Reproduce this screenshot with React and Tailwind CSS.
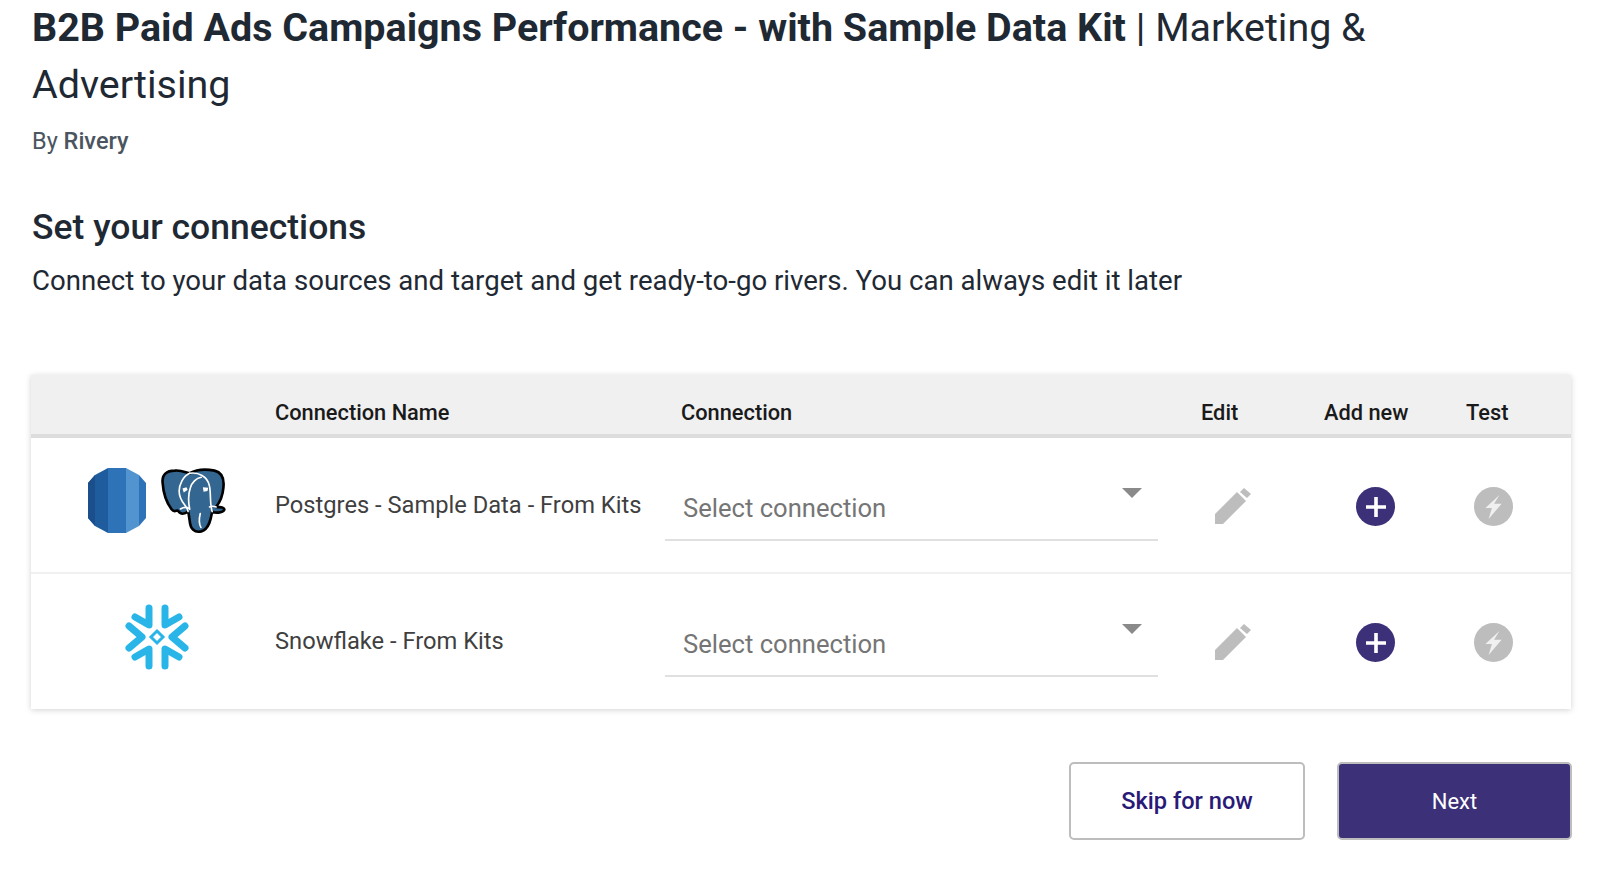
import React from 'react';

const RdsLogo = () => (
  <svg width="58" height="65" viewBox="0 0 58 65">
    <polygon points="7,7 20,0 20,65 7,58 0,50 0,15" fill="#1f5c9e" />
    <polygon points="0,15 7,7 7,58 0,50" fill="#1a4f8b" />
    <polygon points="20,0 38,0 38,65 20,65" fill="#2e73b8" />
    <polygon points="38,0 51,7 51,58 38,65" fill="#5294cf" />
    <polygon points="51,7 58,15 58,50 51,58" fill="#2e73b8" />
  </svg>
);

const PostgresLogo = () => (
  <svg width="66" height="66" viewBox="0 0 200 200">
    <path
      d="M8 45C5 20 20 8 45 8C60 6 75 12 90 16C110 5 140 3 165 8C190 14 195 35 192 60C190 85 180 105 170 118C178 118 192 118 195 125C195 135 170 138 158 132C155 150 150 185 125 192C105 197 92 185 90 160C88 150 88 140 85 132C75 140 62 142 55 130C50 125 45 138 35 125C20 105 10 75 8 45Z"
      fill="#336791"
      stroke="#000"
      strokeWidth="8"
      strokeLinejoin="round"
    />
    <g fill="none" stroke="#fff" strokeWidth="5" strokeLinecap="round">
      <path d="M90 16C70 25 58 50 58 70C58 85 65 100 75 112C80 120 85 125 85 132" />
      <path d="M90 16C115 12 145 25 150 55C155 80 150 105 158 132" />
      <path d="M90 125C85 100 85 80 92 60C96 45 110 30 125 28" />
      <path d="M62 124C72 118 80 118 88 122" />
      <path d="M150 118C158 114 165 116 170 118" />
      <path d="M122 138C118 155 118 170 124 180" />
    </g>
    <path d="M68 62L80 58L84 66L72 74Z" fill="#fff" />
    <path d="M130 58L146 60L144 70L132 72Z" fill="#fff" />
  </svg>
);

const SnowflakeLogo = () => (
  <svg width="64" height="66" viewBox="0 0 64 66">
    <g fill="none" stroke="#29b5e8" strokeWidth="7" strokeLinecap="round" strokeLinejoin="round">
      <path d="M24 4V21L10 13" />
      <path d="M40 4V21L54 13" />
      <path d="M24 62V45L10 53" />
      <path d="M40 62V45L54 53" />
      <path d="M4 22L17 33L4 44" />
      <path d="M60 22L47 33L60 44" />
    </g>
    <path d="M32 27L38 33L32 39L26 33Z" fill="none" stroke="#29b5e8" strokeWidth="3" />
  </svg>
);

const PencilIcon = () => (
  <svg width="36" height="36" viewBox="0 0 36 36" fill="#bdbdbd">
    <polygon points="0,26 22,4 31,13 8,36 0,36" />
    <polygon points="25,4 29,0 36,6 32,10" />
  </svg>
);

const PlusIcon = () => (
  <div className="flex h-[39px] w-[39px] items-center justify-center rounded-full bg-[#3c3078]">
    <svg width="22" height="22" viewBox="0 0 22 22">
      <path d="M11 1V21M1 11H21" stroke="#fff" strokeWidth="3.6" />
    </svg>
  </div>
);

const TestIcon = () => (
  <div className="flex h-[39px] w-[39px] items-center justify-center rounded-full bg-[#bdbdbd]">
    <svg width="17" height="26" viewBox="0 0 15 24" fill="#f0f0f0">
      <polygon points="13,1 0,13 6,13 3,23 15,9 8,9" />
    </svg>
  </div>
);

const Row = ({ logos, name, rowHeight }) => (
  <div className={`grid grid-cols-[244px_390px_493px_1fr] ${rowHeight}`}>
    <div className="flex items-center justify-center gap-[14px] pl-[7px] pb-[9px]">{logos}</div>
    <div className="pt-[52px] text-[23.7px] leading-[30px] text-[#3f3f3f]">{name}</div>
    <div className="pt-[32px]">
      <div className="relative h-[71px] border-b-2 border-[#e0e0e0]">
        <span className="absolute left-[18px] top-[22px] text-[25.6px] leading-[32px] text-[#757575]">Select connection</span>
        <span className="absolute right-[16px] top-[18px] h-0 w-0 border-x-[10px] border-t-[10px] border-x-transparent border-t-[#8a8a8a]" />
      </div>
    </div>
    <div className="flex items-start pt-[49px]">
      <div className="ml-[57px] mt-[1px] w-[36px]"><PencilIcon /></div>
      <div className="ml-[105px]"><PlusIcon /></div>
      <div className="ml-[79px]"><TestIcon /></div>
    </div>
  </div>
);

export default function App() {
  return (
    <div className="h-[890px] overflow-hidden bg-white pl-[32px] pr-[29px] font-['Roboto',sans-serif]">
      <h1 className="max-w-[1400px] text-[39.45px] leading-[56.5px] text-[#1f2933]">
        <span className="font-bold">B2B Paid Ads Campaigns Performance - with Sample Data Kit</span>
        <span className="font-normal"> | Marketing &amp; Advertising</span>
      </h1>
      <p className="mt-[13px] text-[23.5px] leading-[30px] text-[#4a5560]">
        By <span className="font-medium">Rivery</span>
      </p>
      <h2 className="mt-[49px] text-[35.5px] leading-[44px] font-medium text-[#1f2933]">Set your connections</h2>
      <p className="mt-[14px] text-[27.6px] leading-[36px] text-[#1f2933]">
        Connect to your data sources and target and get ready-to-go rivers. You can always edit it later
      </p>

      <div className="-ml-[1px] mt-[76px] bg-white shadow-[0_1px_6px_rgba(0,0,0,0.18)]">
        <div className="grid h-[63px] grid-cols-[244px_406px_520px_123px_142px_1fr] items-center border-b-4 border-[#dddddd] bg-[#f0f0f0] pt-[18px] text-[21.8px] font-medium text-[#1a1a1a]">
          <div />
          <div>Connection Name</div>
          <div>Connection</div>
          <div>Edit</div>
          <div>Add new</div>
          <div>Test</div>
        </div>
        <Row
          rowHeight="h-[136px] border-b-2 border-[#f0f0f0]"
          name="Postgres - Sample Data - From Kits"
          logos={<><RdsLogo /><PostgresLogo /></>}
        />
        <Row rowHeight="h-[135px]" name="Snowflake - From Kits" logos={<SnowflakeLogo />} />
      </div>

      <div className="-mr-[1px] mt-[53px] flex justify-end gap-[32px]">
        <button className="h-[78px] w-[236px] rounded-[5px] border-2 border-[#bdbdbd] bg-white pt-[1px] text-[23.6px] font-medium text-[#2a1a78]">
          Skip for now
        </button>
        <button className="h-[78px] w-[235px] rounded-[5px] border-2 border-[#bdbdbd] bg-[#3c3078] text-[22px] text-white">
          Next
        </button>
      </div>
    </div>
  );
}
